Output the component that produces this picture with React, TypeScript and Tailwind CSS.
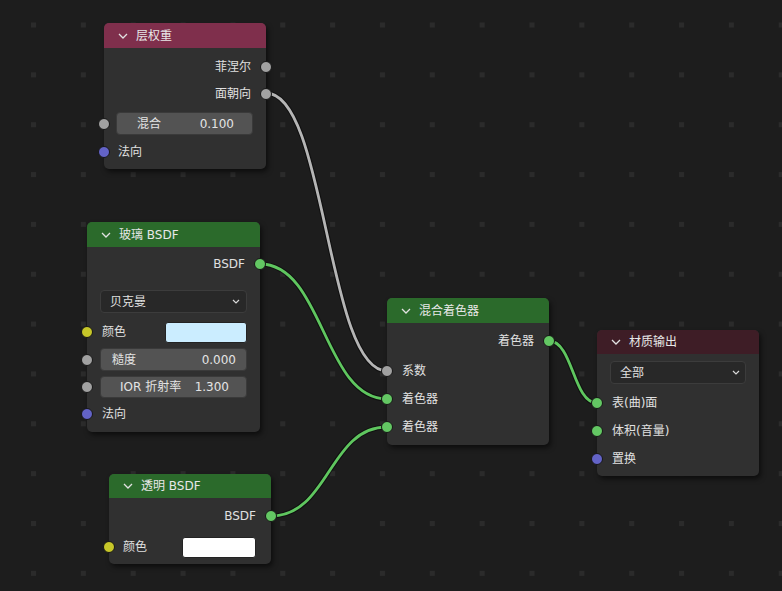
import React from "react";

const F = "font-['DejaVu_Sans','Noto_Sans_CJK_SC',sans-serif]";

function Socket({ cls, side }: { cls: string; side: "l" | "r" }) {
  return (
    <span
      className={`absolute top-1/2 -translate-y-1/2 w-[12px] h-[12px] rounded-full border border-[#161616] ${cls} ${
        side === "l" ? "left-[-6px]" : "right-[-6px]"
      }`}
    />
  );
}

function Chevron() {
  return (
    <svg width="10" height="6" viewBox="0 0 10 6" className="shrink-0">
      <polyline points="1,1 5,5 9,1" fill="none" stroke="#e2e2e2" strokeWidth="1.3" />
    </svg>
  );
}

function SmallChevron() {
  return (
    <svg width="8" height="5" viewBox="0 0 8 5" className="shrink-0">
      <polyline points="1,1 4,4 7,1" fill="none" stroke="#d8d8d8" strokeWidth="1.2" />
    </svg>
  );
}

const GRAY = "bg-[#a1a1a1]";
const GREEN = "bg-[#63c763]";
const YELLOW = "bg-[#c7c729]";
const BLUE = "bg-[#6363c7]";

export default function App() {
  return (
    <div className={`relative w-[782px] h-[591px] overflow-hidden bg-[#1d1d1d] text-[12px] text-[#e0e0e0] ${F}`}>
      <svg className="absolute inset-0" width="782" height="591">
        <defs>
          <pattern id="dots" x="31" y="22.5" width="49.85" height="49.85" patternUnits="userSpaceOnUse">
            <rect x="0" y="0" width="5" height="5" fill="#2b2b2b" />
          </pattern>
        </defs>
        <rect x="0" y="0" width="782" height="591" fill="url(#dots)" />
        <g fill="none" strokeLinecap="round">
          <path d="M266 93 C 326.5 93, 326.5 371, 387 371" stroke="rgba(0,0,0,0.45)" strokeWidth="5" />
          <path d="M266 93 C 326.5 93, 326.5 371, 387 371" stroke="#b5b5b5" strokeWidth="2.8" />
          <path d="M260 264 C 323.5 264, 323.5 399, 387 399" stroke="rgba(0,0,0,0.45)" strokeWidth="5" />
          <path d="M260 264 C 323.5 264, 323.5 399, 387 399" stroke="#5fc65f" strokeWidth="2.8" />
          <path d="M271 516 C 329 516, 329 427, 387 427" stroke="rgba(0,0,0,0.45)" strokeWidth="5" />
          <path d="M271 516 C 329 516, 329 427, 387 427" stroke="#5fc65f" strokeWidth="2.8" />
          <path d="M549 341 C 573 341, 573 403, 597 403" stroke="rgba(0,0,0,0.45)" strokeWidth="5" />
          <path d="M549 341 C 573 341, 573 403, 597 403" stroke="#5fc65f" strokeWidth="2.8" />
        </g>
      </svg>

      {/* 层权重 */}
      <div className="absolute left-[104px] top-[23px] w-[162px] h-[146px] rounded-[5px] bg-[#303030] shadow-[2px_3px_5px_rgba(0,0,0,0.55)] flex flex-col">
        <div className="h-[25px] shrink-0 rounded-t-[5px] bg-[#7f2f4c] flex items-center pl-[14px] gap-[8px] text-[#e8e8e8]">
          <Chevron />
          <span>层权重</span>
        </div>
        <div className="pt-[5px] flex flex-col">
          <div className="relative h-[27px] flex items-center justify-end pr-[15px]">
            <span>菲涅尔</span>
            <Socket cls={GRAY} side="r" />
          </div>
          <div className="relative h-[27px] flex items-center justify-end pr-[15px]">
            <span>面朝向</span>
            <Socket cls={GRAY} side="r" />
          </div>
          <div className="relative h-[33px] flex items-center pl-[12px] pr-[13px]">
            <Socket cls={GRAY} side="l" />
            <div className="flex-1 h-[23px] rounded-[4px] bg-[#535353] border border-[#3a3a3a] flex items-center justify-between pl-[20px] pr-[18px] text-[#e4e4e4]">
              <span>混合</span>
              <span>0.100</span>
            </div>
          </div>
          <div className="relative h-[24px] flex items-center pl-[14px]">
            <Socket cls={BLUE} side="l" />
            <span>法向</span>
          </div>
        </div>
      </div>

      {/* 玻璃 BSDF */}
      <div className="absolute left-[87px] top-[222px] w-[173px] h-[210px] rounded-[5px] bg-[#303030] shadow-[2px_3px_5px_rgba(0,0,0,0.55)] flex flex-col">
        <div className="h-[25px] shrink-0 rounded-t-[5px] bg-[#2b6a2b] flex items-center pl-[14px] gap-[8px] text-[#e8e8e8]">
          <Chevron />
          <span>玻璃 BSDF</span>
        </div>
        <div className="pt-[4px] flex flex-col">
          <div className="relative h-[26px] flex items-center justify-end pr-[15px]">
            <span>BSDF</span>
            <Socket cls={GREEN} side="r" />
          </div>
          <div className="mt-[13px] mx-[13px] h-[23px] rounded-[4px] bg-[#282828] border border-[#3c3c3c] flex items-center justify-between pl-[9px] pr-[6px]">
            <span>贝克曼</span>
            <SmallChevron />
          </div>
          <div className="relative mt-[5px] h-[28px] flex items-center pl-[15px] pr-[13px]">
            <Socket cls={YELLOW} side="l" />
            <span>颜色</span>
            <div className="ml-auto w-[82px] h-[21px] rounded-[3px] bg-[#cbedff] border border-[#232323]" />
          </div>
          <div className="relative h-[27px] flex items-center pl-[13px] pr-[13px]">
            <Socket cls={GRAY} side="l" />
            <div className="flex-1 h-[23px] rounded-[4px] bg-[#535353] border border-[#3a3a3a] flex items-center justify-between pl-[11px] pr-[10px] text-[#e4e4e4]">
              <span>糙度</span>
              <span>0.000</span>
            </div>
          </div>
          <div className="relative h-[28px] flex items-center pl-[13px] pr-[13px]">
            <Socket cls={GRAY} side="l" />
            <div className="flex-1 h-[22px] rounded-[4px] bg-[#535353] border border-[#3a3a3a] flex items-center justify-between pl-[19px] pr-[17px] text-[#e4e4e4]">
              <span>IOR 折射率</span>
              <span>1.300</span>
            </div>
          </div>
          <div className="relative h-[26px] flex items-center pl-[15px]">
            <Socket cls={BLUE} side="l" />
            <span>法向</span>
          </div>
        </div>
      </div>

      {/* 透明 BSDF */}
      <div className="absolute left-[109px] top-[474px] w-[162px] h-[90px] rounded-[5px] bg-[#303030] shadow-[2px_3px_5px_rgba(0,0,0,0.55)] flex flex-col">
        <div className="h-[24px] shrink-0 rounded-t-[5px] bg-[#2b6a2b] flex items-center pl-[14px] gap-[8px] text-[#e8e8e8]">
          <Chevron />
          <span>透明 BSDF</span>
        </div>
        <div className="pt-[5px] flex flex-col">
          <div className="relative h-[26px] flex items-center justify-end pr-[15px]">
            <span>BSDF</span>
            <Socket cls={GREEN} side="r" />
          </div>
          <div className="relative mt-[5px] h-[26px] flex items-center pl-[14px] pr-[15px]">
            <Socket cls={YELLOW} side="l" />
            <span>颜色</span>
            <div className="ml-auto w-[74px] h-[21px] rounded-[3px] bg-white border border-[#232323]" />
          </div>
        </div>
      </div>

      {/* 混合着色器 */}
      <div className="absolute left-[387px] top-[298px] w-[162px] h-[147px] rounded-[5px] bg-[#303030] shadow-[2px_3px_5px_rgba(0,0,0,0.55)] flex flex-col">
        <div className="h-[25px] shrink-0 rounded-t-[5px] bg-[#2b6a2b] flex items-center pl-[14px] gap-[8px] text-[#e8e8e8]">
          <Chevron />
          <span>混合着色器</span>
        </div>
        <div className="pt-[5px] flex flex-col">
          <div className="relative h-[26px] flex items-center justify-end pr-[15px]">
            <span>着色器</span>
            <Socket cls={GREEN} side="r" />
          </div>
          <div className="relative mt-[3px] h-[28px] flex items-center pl-[15px]">
            <Socket cls={GRAY} side="l" />
            <span>系数</span>
          </div>
          <div className="relative h-[28px] flex items-center pl-[15px]">
            <Socket cls={GREEN} side="l" />
            <span>着色器</span>
          </div>
          <div className="relative h-[28px] flex items-center pl-[15px]">
            <Socket cls={GREEN} side="l" />
            <span>着色器</span>
          </div>
        </div>
      </div>

      {/* 材质输出 */}
      <div className="absolute left-[597px] top-[330px] w-[162px] h-[146px] rounded-[5px] bg-[#303030] shadow-[2px_3px_5px_rgba(0,0,0,0.55)] flex flex-col">
        <div className="h-[24px] shrink-0 rounded-t-[5px] bg-[#3e1d26] flex items-center pl-[14px] gap-[8px] text-[#e8e8e8]">
          <Chevron />
          <span>材质输出</span>
        </div>
        <div className="pt-[7px] flex flex-col">
          <div className="mx-[13px] h-[23px] rounded-[4px] bg-[#282828] border border-[#3c3c3c] flex items-center justify-between pl-[9px] pr-[5px]">
            <span>全部</span>
            <SmallChevron />
          </div>
          <div className="relative mt-[5px] h-[28px] flex items-center pl-[15px]">
            <Socket cls={GREEN} side="l" />
            <span>表(曲)面</span>
          </div>
          <div className="relative h-[28px] flex items-center pl-[15px]">
            <Socket cls={GREEN} side="l" />
            <span>体积(音量)</span>
          </div>
          <div className="relative h-[27px] flex items-center pl-[15px]">
            <Socket cls={BLUE} side="l" />
            <span>置换</span>
          </div>
        </div>
      </div>
    </div>
  );
}
